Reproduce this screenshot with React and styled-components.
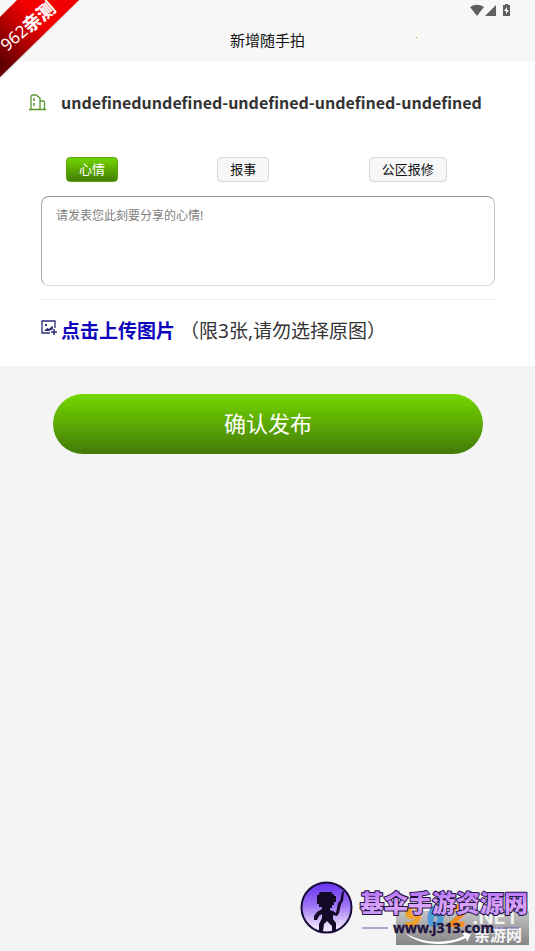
import React, { useState } from "react";
import styled, { createGlobalStyle, css } from "styled-components";

const green = "linear-gradient(#74d800, #437a08)";

const GlobalStyle = createGlobalStyle`
  * { box-sizing: border-box; }
  body {
    margin: 0;
    background: #f4f4f4;
    color: #333;
    font-family: "Noto Sans", "Noto Sans CJK SC", sans-serif;
  }
  button, textarea { font-family: inherit; }
`;

const Page = styled.div`
  position: relative;
  display: flex;
  flex-direction: column;
  min-height: 100vh;
`;

const Header = styled.header`
  background: #f7f7f7;
`;

const StatusBar = styled.div`
  display: flex;
  justify-content: flex-end;
  height: 20px;
  padding: 4px 24px 0 0;
`;

const StatusIcons = styled.svg`
  width: 41px;
  height: 13px;
  fill: #5f5f5f;
`;

const TitleBar = styled.div`
  display: flex;
  align-items: center;
  justify-content: center;
  height: 41px;
  padding-bottom: 2px;
`;

const Title = styled.h1`
  margin: 0;
  color: #111;
  font-size: 15px;
  font-weight: 400;
  line-height: 24px;
`;

const Ribbon = styled.svg`
  position: absolute;
  top: 0;
  left: 0;
  width: 80px;
  height: 80px;
`;

const Speck = styled.i`
  position: absolute;
  top: 37px;
  right: 118px;
  width: 1px;
  height: 1px;
  background: #a4b400;
`;

const Panel = styled.main`
  background: #fff;
  padding: 27px 40px 21px 41px;
`;

const House = styled.div`
  display: flex;
  align-items: center;
  gap: 15px;
  min-height: 28px;
  margin-left: -12px;
`;

const HouseIcon = styled.svg`
  flex: none;
  width: 17px;
  height: 17px;
  fill: none;
  stroke: #58972f;
`;

const HouseName = styled.h2`
  margin: 0;
  font-family: "Noto Sans CJK SC", sans-serif;
  font-size: 16px;
  font-weight: 700;
  line-height: 24px;
`;

const Kinds = styled.div`
  display: grid;
  grid-template-columns: repeat(3, 1fr);
  justify-items: start;
  margin-top: 41px;
  padding-left: 25px;
  margin-right: -25px;
`;

const Kind = styled.button`
  height: 25px;
  padding: 0 12px 2px;
  border: 1px solid #d8d8d8;
  border-radius: 4px;
  background: #f7f7f7;
  color: #111;
  font-size: 13px;
  line-height: 20px;
  white-space: nowrap;
  ${(p) =>
    p.$active &&
    css`
      border-color: #5ba50d;
      background: ${green} border-box;
      color: #fff;
    `}
`;

const Message = styled.textarea`
  display: block;
  width: 100%;
  height: 90px;
  margin-top: 14px;
  padding: 10px 14px;
  border: 1px solid;
  border-color: #999 #c4c4c4 #ddd #aaa;
  border-radius: 8px;
  background: #fff;
  color: #333;
  font-size: 12px;
  line-height: 18px;
  resize: none;
  outline: none;
  &::placeholder { color: #808080; }
`;

const Upload = styled.div`
  display: flex;
  align-items: center;
  gap: 5px;
  margin-top: 13px;
  padding-top: 17px;
  border-top: 1px solid #f0f0f0;
  font-size: 19px;
  line-height: 28px;
  white-space: nowrap;
`;

const UploadButton = styled.button`
  display: flex;
  align-items: center;
  gap: 4px;
  padding: 0;
  border: 0;
  background: none;
  color: #0c05bd;
  font-size: 19px;
  font-weight: 700;
  line-height: 28px;
`;

const UploadIcon = styled.svg`
  width: 16px;
  height: 16px;
  margin-bottom: 6px;
  fill: none;
  stroke: #2b2b78;
`;

const Submit = styled.button`
  height: 60px;
  margin: 28px 52px 0 53px;
  padding: 0 0 2px;
  border: 0;
  border-radius: 30px;
  background: ${green};
  color: #fff;
  font-size: 22px;
  line-height: 32px;
`;

const Watermark = styled.svg`
  position: absolute;
  right: 0;
  bottom: 0;
  width: 245px;
  height: 81px;
`;

function CornerRibbon() {
  return (
    <Ribbon viewBox="0 0 80 80">
      <defs>
        <linearGradient id="ribbon" x1="0" y1="1" x2="1" y2="0">
          <stop offset="0.12" stopColor="#650000" />
          <stop offset="0.45" stopColor="#c40000" />
          <stop offset="0.65" stopColor="#f50000" />
          <stop offset="0.9" stopColor="#ef0000" />
        </linearGradient>
      </defs>
      <path d="M17 0H80L0 79V17Z" fill="#bbb" opacity=".5" />
      <path d="M17 0H79L0 77V17Z" fill="url(#ribbon)" />
      <g transform="translate(7 52) rotate(-41)" fill="#fff">
        <text x="0" y="0" fontSize="17">962</text>
        <text x="29" y="1" fontSize="18" fontWeight="900">亲测</text>
      </g>
    </Ribbon>
  );
}

function SiteMark() {
  return (
    <Watermark viewBox="0 0 245 81">
      <defs>
        <linearGradient id="disc" x1="0" y1="0" x2="0" y2="1">
          <stop offset="0" stopColor="#6530f0" />
          <stop offset="0.45" stopColor="#9b70f5" />
          <stop offset="0.9" stopColor="#f0e4fc" />
        </linearGradient>
        <linearGradient id="name" x1="0" y1="0" x2="0" y2="1">
          <stop offset="0.2" stopColor="#b878f4" />
          <stop offset="0.6" stopColor="#dca6fa" />
          <stop offset="1" stopColor="#b48cf8" />
        </linearGradient>
        <linearGradient id="plate" x1="0" y1="0" x2="0" y2="1">
          <stop offset="0" stopColor="#c4c4c4" />
          <stop offset="1" stopColor="#858585" />
        </linearGradient>
      </defs>
      <path d="M106 41H239V75H106Z" fill="url(#plate)" />
      <g fontWeight="900" fontStyle="italic" fontSize="32">
        <text x="114" y="57" fill="#f4a12b">9</text>
        <text x="136" y="57" fill="#4d9bd8">6</text>
        <text x="159" y="57" fill="#f48c22">2</text>
      </g>
      <text x="182" y="54" fill="#f4f4f4" fontFamily="Inter, sans-serif" fontSize="20" fontWeight="600">.NET</text>
      <text x="184" y="71" fill="#f5f5f5" fontSize="16" fontWeight="700">亲游网</text>
      <path d="M115 63C133 74 158 74 174 66L172 62L181 64L177 72L176 68C155 78 128 75 115 63Z" fill="#fff" />
      <circle cx="36.500" cy="37.500" r="25" fill="url(#disc)" stroke="#160b38" strokeWidth="2" />
      <path
        d="M31 22H42V24H44V26H46V32H44V35H42V38H40V40L43 41L46 43L48 33L50 31L52 22L54 21L53 31L51 34L49 43L47 46L43 45V49L46 53V61H42V56L37 51L34 54L33 61H29V54L32 48V44L29 46L27 50H24V46L27 42L32 39V37H29V34H27V25H29V23Z"
        fill="#130a27"
      />
      <text
        x="70" y="42" fontSize="24" fontWeight="900"
        fill="url(#name)" stroke="#21113f" strokeWidth="2" strokeLinejoin="round" paintOrder="stroke"
      >
        基伞手游资源网
      </text>
      <path d="M72 58H98M205 58H229" stroke="#6756b4" />
      <text x="103" y="63" fontSize="14" fontWeight="700" fill="#21133f" stroke="#21133f" strokeWidth=".3">www.j313.com</text>
    </Watermark>
  );
}

const kinds = ["心情", "报事", "公区报修"];

export default function App() {
  const [kind, setKind] = useState(kinds[0]);
  return (
    <>
      <GlobalStyle />
      <Page>
        <Header>
          <StatusBar>
            <StatusIcons viewBox="0 0 41 13" aria-hidden="true">
              <path d="M0 3Q7-1.500 14 3L7 12Z" />
              <path d="M26 1V12H15Z" />
              <path d="M35 0H38V1H40V12H33V1H35Z" />
              <path d="M37 3L34 7H36V10L39 6H37Z" fill="#fff" />
            </StatusIcons>
          </StatusBar>
          <TitleBar>
            <Title>新增随手拍</Title>
          </TitleBar>
        </Header>
        <Panel>
          <House>
            <HouseIcon viewBox="0 0 17 17" aria-hidden="true">
              <path d="M0 15.500H17M2 15V3Q2 1 4 1H7L11 4V15M11 7H14.500Q15.500 7 15.500 9V15" strokeWidth="1.300" />
              <path d="M5 4V7M5 9V12" strokeWidth="1.500" />
            </HouseIcon>
            <HouseName>undefinedundefined-undefined-undefined-undefined</HouseName>
          </House>
          <Kinds>
            {kinds.map((k) => (
              <Kind key={k} type="button" $active={k === kind} aria-pressed={k === kind} onClick={() => setKind(k)}>
                {k}
              </Kind>
            ))}
          </Kinds>
          <Message aria-label="心情" placeholder="请发表您此刻要分享的心情!" />
          <Upload>
            <UploadButton type="button">
              <UploadIcon viewBox="0 0 16 16" aria-hidden="true">
                <path d="M9 13H1V1H14V8" strokeWidth="1.300" />
                <path d="M3 11L6 8L8 9L11 6L12 7V9L8 11Z" fill="#2b2b78" stroke="none" />
                <path d="M4 4H6V6H4Z" fill="#2b2b78" stroke="none" />
                <path d="M13 9V15M10 12H16" strokeWidth="1.500" />
              </UploadIcon>
              点击上传图片
            </UploadButton>
            <span>（限3张,请勿选择原图）</span>
          </Upload>
        </Panel>
        <Submit type="button">确认发布</Submit>
        <CornerRibbon />
        <Speck />
        <SiteMark />
      </Page>
    </>
  );
}
